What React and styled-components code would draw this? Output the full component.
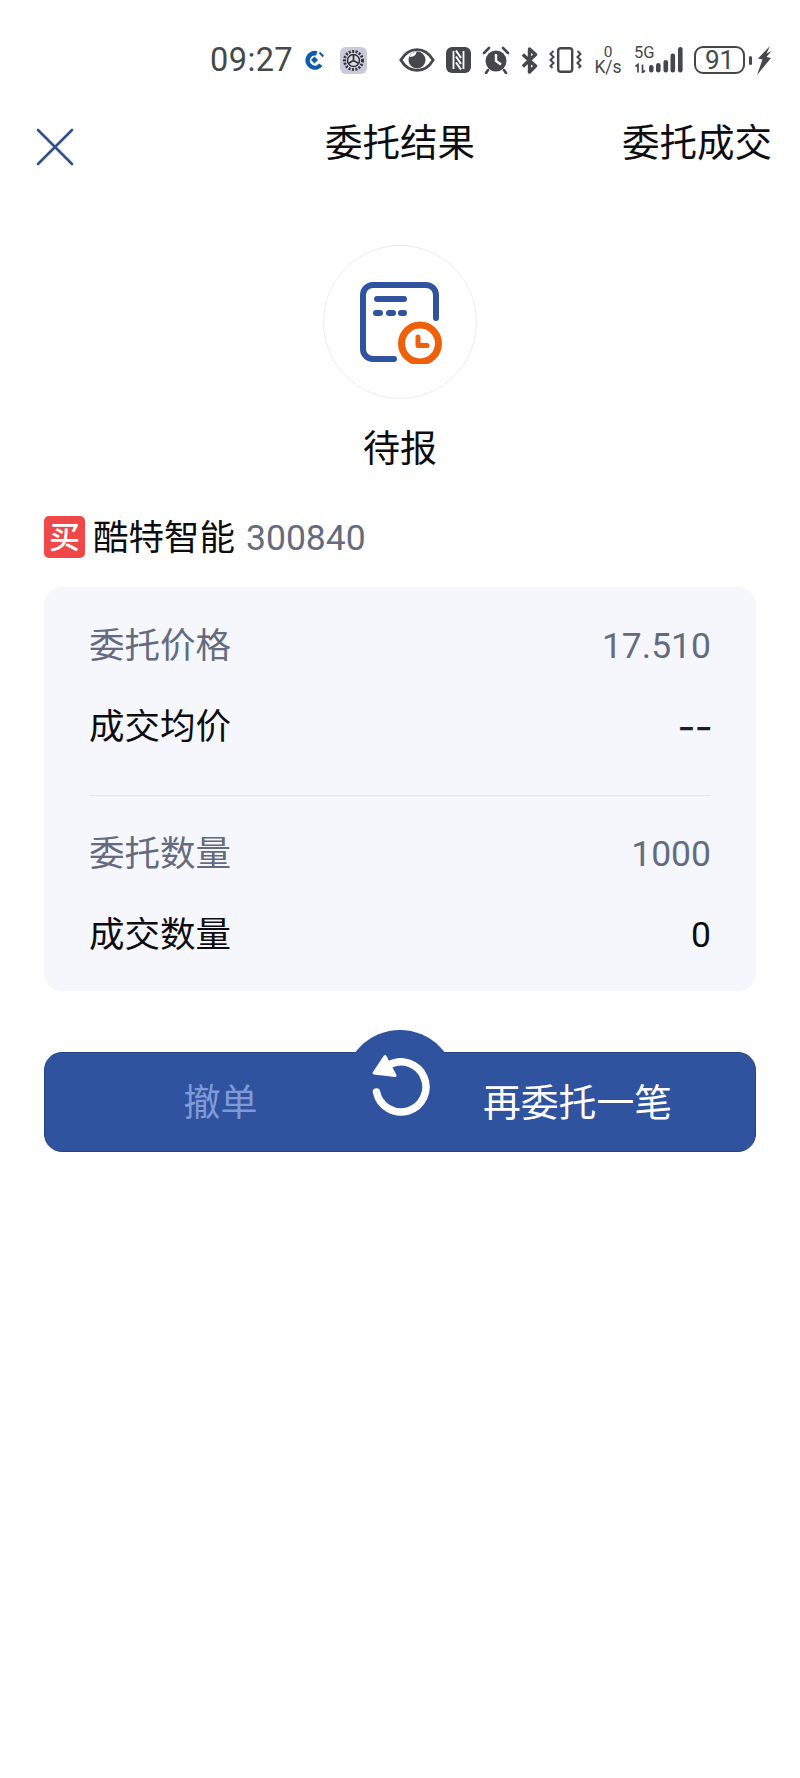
import React from 'react';
import styled, { createGlobalStyle } from 'styled-components';

const GlobalStyle = createGlobalStyle`
  html, body {
    margin: 0;
    padding: 0;
    background: #ffffff;
  }
  body {
    font-family: Roboto, "Noto Sans CJK SC", sans-serif;
  }
`;

const Page = styled.div`
  width: 800px;
  height: 1778px;
  overflow: hidden;
  background: #ffffff;
  color: #0d0d0f;
`;

/* status bar */
const StatusBar = styled.div`
  height: 60px;
  padding: 30px 28px 0 0;
  display: flex;
  justify-content: flex-end;
  align-items: center;
  color: #45474b;
`;

const Clock = styled.span`
  font-size: 32.5px;
  line-height: 36px;
  letter-spacing: 0.4px;
  margin-right: ${({ $gap }) => $gap}px;
`;

const Slot = styled.span`
  display: flex;
  align-items: center;
  margin-right: ${({ $gap }) => $gap || 0}px;
`;

const Speed = styled.span`
  width: 28px;
  margin-right: 12px;
  display: flex;
  flex-direction: column;
  align-items: center;
  font-size: 15.5px;
  line-height: 14px;
`;

const SpeedUnit = styled.span`
  font-size: 17.5px;
  line-height: 16px;
`;

const NetGroup = styled.span`
  position: relative;
  width: 49px;
  height: 26px;
  margin-right: 11px;
`;

const FiveG = styled.span`
  position: absolute;
  left: 0;
  top: -2px;
  font-size: 16.5px;
  line-height: 16px;
`;

const Battery = styled.span`
  width: 51px;
  height: 28px;
  box-sizing: border-box;
  border: 2px solid #45474b;
  border-radius: 9px;
  display: flex;
  justify-content: center;
  align-items: center;
  font-size: 26px;
  line-height: 24px;
  margin-right: 4px;
`;

const BatteryNub = styled.span`
  width: 3px;
  height: 9px;
  border-radius: 2px;
  background: #45474b;
  margin-right: 5px;
`;

/* nav */
const Nav = styled.div`
  height: 106px;
  padding: 0 28px;
  display: grid;
  grid-template-columns: 1fr auto 1fr;
  align-items: center;
`;

const NavTitle = styled.div`
  font-size: 37.5px;
  line-height: 50px;
`;

const NavAction = styled(NavTitle)`
  justify-self: end;
`;

const CloseBtn = styled.div`
  display: flex;
  justify-self: start;
  margin: 7px 0 0 8px;
`;

/* result */
const Result = styled.div`
  padding-top: 49px;
  display: flex;
  flex-direction: column;
  align-items: center;
`;

const StatusCircle = styled.div`
  width: 154px;
  height: 154px;
  box-sizing: border-box;
  border: 1.5px solid #ebecf2;
  border-radius: 50%;
  display: flex;
  justify-content: center;
  align-items: center;
`;

const StatusText = styled.div`
  margin-top: 26px;
  font-size: 37px;
  line-height: 50px;
`;

const Content = styled.div`
  padding: 0 44px;
`;

const StockRow = styled.div`
  margin-top: 41px;
  height: 42px;
  display: flex;
  align-items: center;
`;

const BuyBadge = styled.span`
  width: 41px;
  height: 42px;
  border-radius: 5px;
  background: #f04848;
  color: #ffffff;
  display: flex;
  justify-content: center;
  align-items: center;
  font-size: 31px;
  font-weight: 500;
  line-height: 41px;
  margin-right: 8px;
`;

const StockName = styled.span`
  font-size: 35.5px;
  line-height: 42px;
  padding-top: 2px;
  margin-right: 11px;
`;

const StockCode = styled.span`
  font-size: 35.5px;
  line-height: 42px;
  padding-top: 2px;
  color: #646b7e;
`;

const Card = styled.div`
  margin-top: 29px;
  padding: 33px 45px 32px 45px;
  background: #f6f7fd;
  border-radius: 18px;
`;

const Row = styled.div`
  height: 50px;
  display: flex;
  justify-content: space-between;
  align-items: center;
  font-size: 35.5px;
  color: ${({ $muted }) => ($muted ? '#646b7e' : '#0d0d0f')};
  & + & {
    margin-top: 31px;
  }
`;

const Label = styled.span`
  padding-bottom: 5px;
`;

const Value = styled.span`
  padding-top: 2px;
`;

const DashValue = styled.span`
  font-family: Inter, sans-serif;
  font-size: 40px;
  font-weight: 400;
  letter-spacing: -1px;
  margin-right: -1px;
  color: #1d1f24;
`;

const Divider = styled.div`
  height: 1px;
  background: #e3e5ec;
  margin: 44px 0 32px;
`;

/* action button */
const ActionBar = styled.div`
  position: relative;
  margin-top: 61px;
  height: 100px;
  box-sizing: border-box;
  border: 1px solid #244582;
  border-radius: 18px;
  background: #2f539e;
  display: grid;
  grid-template-columns: 1fr 1fr;
`;

const Bump = styled.div`
  position: absolute;
  left: 50%;
  top: -23px;
  width: 112px;
  height: 112px;
  margin-left: -56px;
  border-radius: 50%;
  background: #2f539e;
  display: flex;
  justify-content: center;
  align-items: center;
`;

const ActionText = styled.div`
  position: relative;
  text-align: center;
  font-size: ${({ $dim }) => ($dim ? 37 : 37.8)}px;
  line-height: 89px;
  padding: 6px ${({ $dim }) => ($dim ? 4 : 0)}px 0 0;
  color: ${({ $dim }) => ($dim ? '#7f9ad6' : '#ffffff')};
`;

const dark = '#45474b';

const CcbIcon = () => (
  <svg width="21" height="20" viewBox="0 0 21 20">
    <path d="M13.500 1.200A9.500 9.500 0 1 0 18.500 16l-3.500-2.600a5 5 0 1 1-3-7.800z" fill="#0f5ca8" />
    <path d="M10.500 6.500L14 10l-3.500 3.500L7 10z" fill="#0f5ca8" />
    <path d="M15.500 2.500l3.800 4" stroke="#0f5ca8" strokeWidth="2" />
  </svg>
);

const GearIcon = () => (
  <svg width="27" height="27" viewBox="0 0 27 27">
    <rect width="27" height="27" rx="6" fill="#c9cad8" />
    <circle cx="13.500" cy="13.500" r="9" fill="none" stroke="#34363f" strokeWidth="3" strokeDasharray="2 1.400" />
    <circle cx="13.500" cy="13.500" r="7.500" fill="#dcdde5" />
    <circle cx="13.500" cy="13.500" r="6" fill="none" stroke="#34363f" strokeWidth="1.600" />
    <path d="M13.500 13.500V8M13.500 13.500l4.800 2.800M13.500 13.500l-4.800 2.800" stroke="#34363f" strokeWidth="1.800" />
  </svg>
);

const EyeIcon = () => (
  <svg width="36" height="24" viewBox="0 0 36 24">
    <path d="M1.800 12C6 5 11.500 1.600 18 1.600S30 5 34.200 12C30 19 24.500 22.400 18 22.400S6 19 1.800 12z" fill="none" stroke={dark} strokeWidth="2.800" />
    <circle cx="18" cy="12" r="8.500" fill={dark} />
    <path d="M10.500 9a8 8 0 0 1 7-5.200c-.3 3-2.800 5.500-7 5.200z" fill="#fff" />
  </svg>
);

const NfcIcon = () => (
  <svg width="25" height="26" viewBox="0 0 25 26">
    <rect width="25" height="26" rx="6" fill={dark} />
    <path d="M7.500 4v18M17.500 4v18" stroke="#fff" strokeWidth="1.800" />
    <path d="M10 3.500l5 7.500M10 9.500l5 7.500M10 15.500l5 7" stroke="#fff" strokeWidth="2" />
  </svg>
);

const AlarmIcon = () => (
  <svg width="28" height="28" viewBox="0 0 28 28">
    <circle cx="14" cy="15" r="10.500" fill={dark} />
    <path d="M14 8V15l5 3.500" fill="none" stroke="#fff" strokeWidth="2.400" />
    <path d="M2 7l5-5M26 7l-5-5M6 24l-2 3M22 24l2 3" stroke={dark} strokeWidth="2.600" strokeLinecap="round" />
  </svg>
);

const BluetoothIcon = () => (
  <svg width="17" height="27" viewBox="0 0 17 27">
    <path d="M1.800 7.500L14.500 19 8.500 25V2l6 5.500L1.800 19.500" fill="none" stroke={dark} strokeWidth="3.400" strokeLinejoin="round" />
  </svg>
);

const VibrateIcon = () => (
  <svg width="33" height="26" viewBox="0 0 33 26">
    <rect x="9.200" y="1.200" width="14" height="23.600" rx="2.500" fill="none" stroke={dark} strokeWidth="2.400" />
    <path d="M4.500 4L1.500 7l3 3-3 3 3 3-3 3 2 2M28.500 4l3 3-3 3 3 3-3 3 3 3-2 2" fill="none" stroke={dark} strokeWidth="2" />
  </svg>
);

const SignalIcon = () => (
  <svg width="49" height="26" viewBox="0 0 49 26" style={{ position: 'absolute', left: 0, top: 0 }}>
    <path d="M4 25.500V17.500L1.500 19.500M8.500 17.500v8l2.500-2" fill="none" stroke={dark} strokeWidth="1.700" />
    <rect x="15" y="18" width="4.500" height="7.500" rx="2.200" fill={dark} />
    <rect x="22" y="16" width="4.600" height="9.500" rx="2.300" fill={dark} />
    <rect x="29.500" y="13" width="4.600" height="12.500" rx="2.300" fill={dark} />
    <rect x="36.500" y="6.500" width="4.600" height="19" rx="2.300" fill={dark} />
    <rect x="44" y="0" width="4.600" height="25.500" rx="2.300" fill={dark} />
  </svg>
);

const BoltIcon = () => (
  <svg width="15" height="29" viewBox="0 0 15 29">
    <path d="M13 0L1 12.500l4.500 1L0 29l14-17-4.500-1 5-6L9.500 7.500z" fill={dark} />
  </svg>
);

const CloseIcon = () => (
  <svg width="38" height="38" viewBox="0 0 38 38">
    <path d="M2 2l34 34M36 2L2 36" stroke="#2f4f8f" strokeWidth="2.600" strokeLinecap="round" />
  </svg>
);

const PendingIcon = () => (
  <svg width="84" height="84" viewBox="0 0 84 84">
    <path d="M36 79H15A10 10 0 0 1 5 69V15A10 10 0 0 1 15 5H68A10 10 0 0 1 78 15V38" fill="none" stroke="#2f539e" strokeWidth="6" strokeLinecap="round" />
    <path d="M19 19H46" stroke="#2f539e" strokeWidth="6" strokeLinecap="round" />
    <path d="M18 33h4M31 33h4M43 33h3" stroke="#2f539e" strokeWidth="6" strokeLinecap="round" />
    <circle cx="62" cy="63.500" r="18.500" fill="#fff" stroke="#f0600a" strokeWidth="7" />
    <path d="M60 57V65.500H69" fill="none" stroke="#f0600a" strokeWidth="5" strokeLinecap="round" strokeLinejoin="round" />
  </svg>
);

const RedoIcon = () => (
  <svg width="62" height="66" viewBox="0 0 62 66">
    <path d="M20 12A25 25 0 1 1 7.500 39" fill="none" stroke="#fff" strokeWidth="7.500" strokeLinecap="round" />
    <path d="M16 3.500L5 20l21 2.500z" fill="#fff" stroke="#fff" strokeWidth="3" strokeLinejoin="round" />
  </svg>
);

export default function App() {
  return (
    <Page>
      <GlobalStyle />
      <StatusBar>
        <Clock $gap={11}>09:27</Clock>
        <Slot $gap={15}><CcbIcon /></Slot>
        <Slot $gap={32}><GearIcon /></Slot>
        <Slot $gap={11}><EyeIcon /></Slot>
        <Slot $gap={11}><NfcIcon /></Slot>
        <Slot $gap={11}><AlarmIcon /></Slot>
        <Slot $gap={11}><BluetoothIcon /></Slot>
        <Slot $gap={12}><VibrateIcon /></Slot>
        <Speed><span>0</span><SpeedUnit>K/s</SpeedUnit></Speed>
        <NetGroup>
          <FiveG>5G</FiveG>
          <SignalIcon />
        </NetGroup>
        <Battery>91</Battery>
        <BatteryNub />
        <Slot><BoltIcon /></Slot>
      </StatusBar>

      <Nav>
        <CloseBtn><CloseIcon /></CloseBtn>
        <NavTitle>委托结果</NavTitle>
        <NavAction>委托成交</NavAction>
      </Nav>

      <Result>
        <StatusCircle><PendingIcon /></StatusCircle>
        <StatusText>待报</StatusText>
      </Result>

      <Content>
        <StockRow>
          <BuyBadge>买</BuyBadge>
          <StockName>酷特智能</StockName>
          <StockCode>300840</StockCode>
        </StockRow>

        <Card>
          <Row $muted><Label>委托价格</Label><Value>17.510</Value></Row>
          <Row><Label>成交均价</Label><DashValue>--</DashValue></Row>
          <Divider />
          <Row $muted><Label>委托数量</Label><Value>1000</Value></Row>
          <Row><Label>成交数量</Label><Value>0</Value></Row>
        </Card>

        <ActionBar>
          <Bump><RedoIcon /></Bump>
          <ActionText $dim>撤单</ActionText>
          <ActionText>再委托一笔</ActionText>
        </ActionBar>
      </Content>
    </Page>
  );
}
